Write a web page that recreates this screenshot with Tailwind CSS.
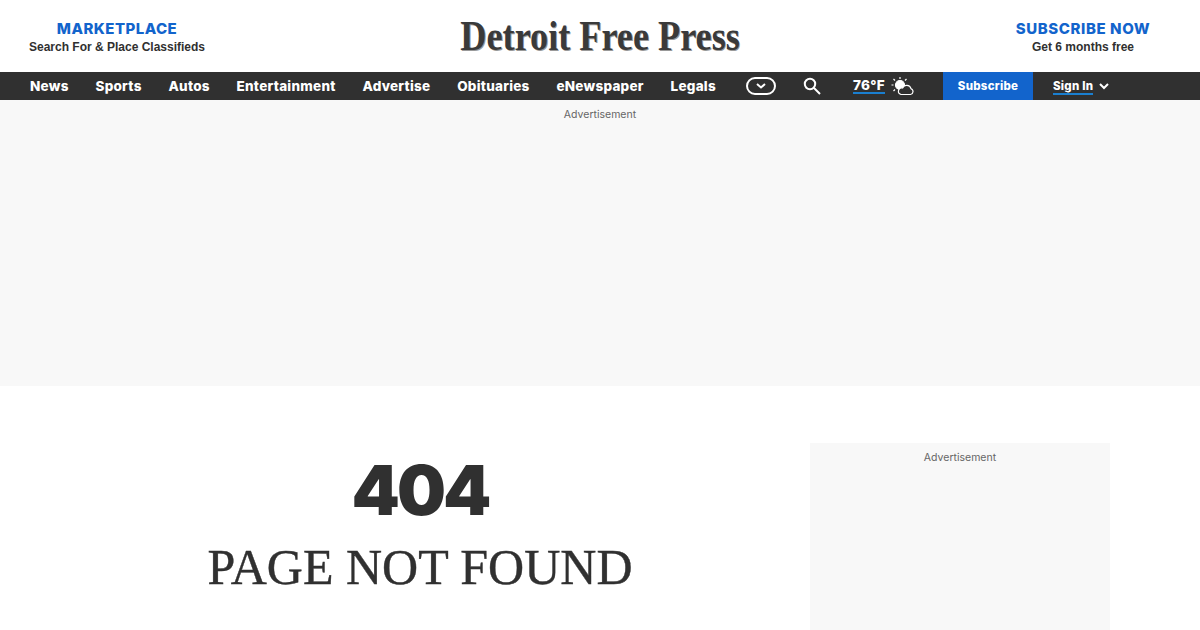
<!DOCTYPE html>
<html lang="en">
<head>
    <meta charset="UTF-8">
    <meta name="viewport" content="width=device-width, initial-scale=1.0">
    <title>Detroit Free Press - Page Not Found</title>
    <script src="https://cdn.jsdelivr.net/npm/@tailwindcss/browser@4"></script>
</head>
<body class="h-[630px] overflow-hidden bg-white text-[#303030] font-['Inter',sans-serif]">
    <header class="h-[72px] flex items-center justify-between">
        <a href="#" class="w-[234px] flex flex-col items-center pt-[3px]">
            <span class="text-[15px] leading-[18px] font-extrabold tracking-[0.45px] text-[#1264cc]">MARKETPLACE</span>
            <span class="text-[12px] leading-[18px] font-bold font-['Liberation_Sans',sans-serif]">Search For &amp; Place Classifieds</span>
        </a>
        <a href="#" class="font-['Liberation_Serif',serif] font-bold text-[42px] leading-none text-[#3a3a3a] scale-x-[0.862] [text-shadow:1px_1px_0_#999]">Detroit Free Press</a>
        <a href="#" class="w-[234px] flex flex-col items-center pt-[3px]">
            <span class="text-[15px] leading-[18px] font-extrabold tracking-[0.6px] text-[#1264cc]">SUBSCRIBE NOW</span>
            <span class="text-[12px] leading-[18px] font-bold font-['Liberation_Sans',sans-serif]">Get 6 months free</span>
        </a>
    </header>

    <nav class="h-[28px] bg-[#303030] text-white text-[13.5px] font-extrabold tracking-[0.25px] flex items-center">
        <ul class="w-[716px] pl-[30px] flex gap-[26.8px]">
            <li><a href="#">News</a></li>
            <li><a href="#">Sports</a></li>
            <li><a href="#">Autos</a></li>
            <li><a href="#">Entertainment</a></li>
            <li><a href="#">Advertise</a></li>
            <li><a href="#">Obituaries</a></li>
            <li><a href="#">eNewspaper</a></li>
            <li><a href="#">Legals</a></li>
        </ul>
        <span class="ml-[30px] w-[30px] h-[18px] rounded-full border-2 border-white flex items-center justify-center">
            <svg width="10" height="6" viewBox="0 0 10 6" fill="none" stroke="white" stroke-width="2"><path d="M1 1l4 3.5L9 1"/></svg>
        </span>
        <svg class="ml-[27px]" width="18" height="18" viewBox="0 0 18 18" fill="none" stroke="white" stroke-width="2"><circle cx="7" cy="7" r="5.2"/><path d="M11 11l6 6"/></svg>
        <a href="#" class="ml-[32px] w-[32px] border-b-2 border-[#1a7fd0] leading-[14px] whitespace-nowrap">76°F</a>
        <svg class="ml-[6px]" width="24" height="20" viewBox="0 0 24 20" fill="none" stroke="white" stroke-width="1.2">
            <circle cx="9" cy="9" r="4.5" fill="white"/>
            <path d="M9 1v2M2.500 3l1.500 1.500M15.500 3L14 4.500M0.500 9h2M2.500 15L4 13.500"/>
            <path d="M10 18.500h9.500a3 3 0 0 0 .5-5.800 4.500 4.500 0 0 0-8.400-.7A3.300 3.300 0 0 0 10 18.500z" fill="#303030"/>
        </svg>
        <a href="#" class="ml-[28px] w-[90px] h-full pt-[1px] bg-[#1264cc] flex items-center justify-center text-[11.500px]">Subscribe</a>
        <a href="#" class="ml-[20px] w-[40px] text-[11.500px] border-b-2 border-[#1a7fd0] leading-[13px] mt-[2px] whitespace-nowrap">Sign In</a>
        <svg class="ml-[6px]" width="10" height="7" viewBox="0 0 10 7" fill="none" stroke="white" stroke-width="2"><path d="M1 1l4 4 4-4"/></svg>
    </nav>

    <section class="h-[286px] bg-[#f8f8f8] text-center text-[10.500px] leading-[12px] text-[#666] pt-[9px]">Advertisement</section>

    <main class="flex pl-[90px] pt-[57px]">
        <div class="w-[660px] text-center">
            <h1 class="text-[69px] leading-[94px] font-black tracking-[-3px]">404</h1>
            <p class="font-['Liberation_Serif',serif] text-[50px] leading-[60px] [-webkit-text-stroke:0.4px_#303030]">PAGE NOT FOUND</p>
        </div>
        <aside class="ml-[60px] w-[300px] h-[187px] bg-[#f8f8f8] text-center text-[10.500px] leading-[12px] text-[#666] pt-[9px]">Advertisement</aside>
    </main>
</body>
</html>
